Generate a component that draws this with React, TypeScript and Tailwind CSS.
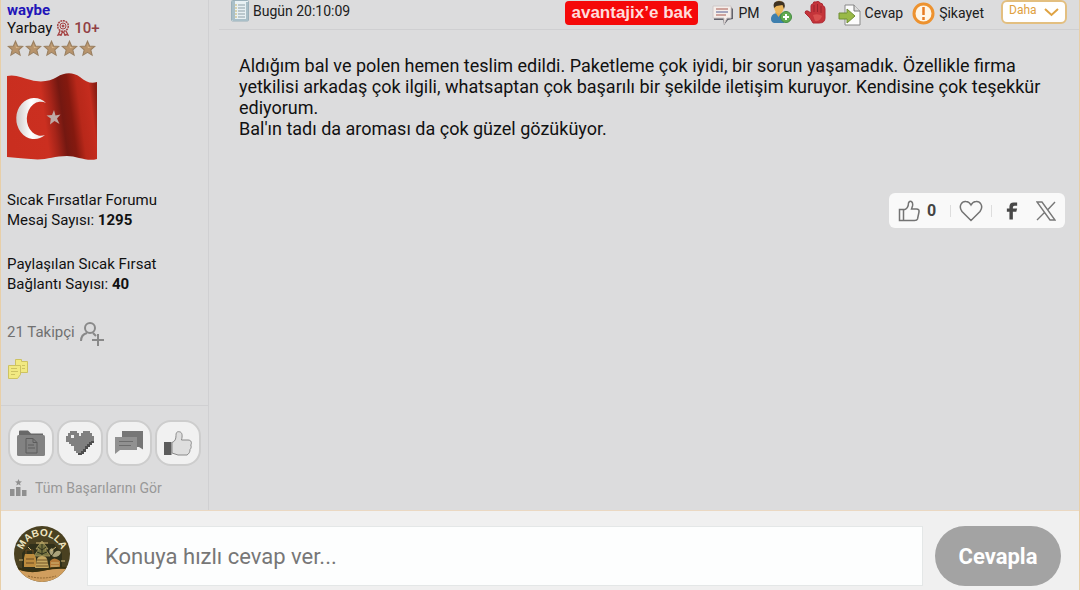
import type { ReactNode } from "react";

function StarRow() {
  return (
    <div className="mt-1 flex gap-px" aria-label="5 yıldız">
      {[1, 2, 3, 4, 5].map((n) => (
        <svg key={n} width="17" height="17" viewBox="0 0 17 17">
          <path
            d="M8.5 1.2l2.1 4.8 5.2.4-4 3.5 1.3 5.2-4.6-2.8-4.6 2.8 1.3-5.2-4-3.5 5.2-.4z"
            fill="#b8946c"
            stroke="#9a8062"
            strokeWidth="1.1"
          />
          <path d="M8.5 3.6l1 3.3 3 .4-3.6 1z" fill="#d9b98f" />
        </svg>
      ))}
    </div>
  );
}

function Flag() {
  return (
    <svg width="90" height="89" viewBox="0 0 90 89" className="block">
      <defs>
        <linearGradient id="cloth" gradientUnits="userSpaceOnUse" x1="0" y1="40" x2="90" y2="28">
          <stop offset="0" stopColor="#c92e1f" />
          <stop offset="0.4" stopColor="#cb2f20" />
          <stop offset="0.5" stopColor="#a52419" />
          <stop offset="0.6" stopColor="#741811" />
          <stop offset="0.7" stopColor="#84190f" />
          <stop offset="0.8" stopColor="#b8281a" />
          <stop offset="0.93" stopColor="#c42c1e" />
          <stop offset="1" stopColor="#8c1e14" />
        </linearGradient>
        <linearGradient id="moon">
          <stop offset="0" stopColor="#cfc9c8" />
          <stop offset="0.5" stopColor="#ffffff" />
          <stop offset="1" stopColor="#e8dedc" />
        </linearGradient>
      </defs>
      <path
        d="M0 4C8 2 16 6 24 8C34 11 44 9 50 5C58 0 66 0 73 5C79 10 84 12 90 10V87C80 90 70 84 60 84C46 84 38 89 24 87C14 86 8 86 0 85Z"
        fill="url(#cloth)"
      />
      <path d="M39 31A18 20.5 0 1 0 38 63A14 17 0 1 1 39 31Z" fill="url(#moon)" />
      <path d="M47 38l1.500 5.500 5-1-3.500 4 2.500 5.500-5-3-4.500 3.500.8-6-4.300-3 5.500-.6z" fill="#bfa9a5" />
    </svg>
  );
}

function Badge({ label, children }: { label: string; children: ReactNode }) {
  return (
    <button
      type="button"
      aria-label={label}
      className="flex size-[46px] items-center justify-center rounded-2xl border-2 border-[#cdcdcd] bg-[#f1f1f1]"
    >
      {children}
    </button>
  );
}

function FolderIcon() {
  return (
    <svg width="28" height="26" viewBox="0 0 28 26">
      <path d="M2 7V1.500Q2 .5 3 .5H11L14 3.500H26V7Z" fill="#686868" />
      <rect y="5" width="28" height="21" rx="1.500" fill="#828282" />
      <path d="M9 8.500h7l4 4V23H9zM16 8.500v4h4M11 15h6M11 18h7" fill="none" stroke="#5c5c5c" />
    </svg>
  );
}

function PixelHeart() {
  return (
    <svg width="28" height="24" viewBox="0 0 28 24">
      <path
        d="M4 0h7v2h2v3h2V2h2V0h7v2h2v3h2v6h-2v2h-2v2h-2v2h-2v3h-2v2h-2v2h-4v-2h-2v-2h-2v-3H8v-2H5v-2H3v-2H0V5h2V2h2z"
        fill="#808080"
      />
      <path
        d="M28 10v2h-2v2h-2v2h-2v2h-2v3h-2v2h-2v1h-4v-2h3v-2h2v-2h2v-3h2v-2h2v-2h2v-1z"
        fill="#4d4d4d"
      />
      <path d="M5 4h3v3H5z" fill="#f1f1f1" />
    </svg>
  );
}

function ChatIcon() {
  return (
    <svg width="28" height="24" viewBox="0 0 28 24">
      <path d="M7 0h21v18.500L24 16H7z" fill="#767676" />
      <path d="M0 6h22v13H5l-5 4z" fill="#919191" />
      <path d="M4 10.500h14M4 14.500h12" stroke="#6c6c6c" strokeWidth="1.200" />
    </svg>
  );
}

function ThumbBadge() {
  return (
    <svg width="28" height="25" viewBox="0 0 28 25">
      <rect y="11" width="7.500" height="13" fill="#5c5c5c" />
      <path
        d="M8 11.500c3-1 4-3.500 4-7C12 .5 14 .5 15.500.8c3 .5 3 4.200 2 8.200h6.500c3.500 0 4 3 2.800 5 .8 2 .2 3.500-.8 4.500 0 2.500-.8 4-3 5.500H14l-6-2z"
        fill="#dedede"
        stroke="#8a8a8a"
      />
    </svg>
  );
}

function Avatar() {
  return (
    <svg width="56" height="56" viewBox="1 1 56 56" role="img" aria-label="Mabolla" className="shrink-0">
      <defs>
        <path id="arc" d="M9 31A20 20 0 0 1 49 31" />
        <clipPath id="round">
          <circle cx="29" cy="29" r="28" />
        </clipPath>
      </defs>
      <circle cx="29" cy="29" r="28" fill="#4a4121" />
      <g clipPath="url(#round)">
        <path d="M9 28l8-9h24l8 9v17H9z" fill="#30301a" />
        <path d="M29 16l-6 8h3l-5 7h16l-5-7h3z" fill="#777441" stroke="#aa9b60" strokeWidth=".8" />
        <path d="M29 19v11M25 22l4 3 4-3M24 27l5 2 5-2" stroke="#2f321d" fill="none" />
        <path d="M12 29h9l2 4v9H11v-9z" fill="#bd8c3e" />
        <path d="M13 29v-4h7v4M13 34h8M13 38h8" stroke="#6b4b20" fill="none" />
        <path d="M24 34c1-4 9-4 10 0l2 9H22z" fill="#c5a760" />
        <path d="M24 35h10M23 38h12M23 41h12" stroke="#735426" />
        <path d="M39 31q5-8 9-4-1 5-7 5M38 30q-4-5 1-7 3 3 0 7" fill="#aaa27a" />
        <path d="M37 36q4-5 10 0v8H37z" fill="#b47a38" />
        <path d="M38 38h8M38 41h8M15 22l3 3M43 22l-5 4M6 35h4M48 36h4M23 18h12" stroke="#d0b777" />
        <path d="M3 43q12 6 25 3t28-3v16H3z" fill="#d09e5e" />
        <path d="M4 43q12 5 25 2t25-2" fill="none" stroke="#38300f" strokeWidth="2" />
        <path d="M15 51q14 4 28 0" fill="none" stroke="#8f6632" strokeDasharray="2 1" />
      </g>
      <text fontFamily="Liberation Sans, sans-serif" fontSize="10" fontWeight="700" fill="#efe5c0">
        <textPath href="#arc" startOffset="50%" textAnchor="middle">
          MABOLLA
        </textPath>
      </text>
    </svg>
  );
}

function Profile() {
  return (
    <aside className="flex w-52 shrink-0 flex-col border-r border-[#d0d0d2]">
      <div className="flex-1 px-1.5 text-[15px] leading-5">
        <a href="#waybe" className="block font-bold text-[#2215b8]">
          waybe
        </a>
        <div className="flex h-4 items-center gap-1">
          <span>Yarbay</span>
          <svg width="14" height="16" viewBox="0 0 14 16" fill="none" stroke="#a54444">
            <circle cx="7" cy="6" r="5.300" strokeWidth="1.500" strokeDasharray="2 .7" />
            <circle cx="7" cy="6" r="3" />
            <circle cx="7" cy="6" r="1" fill="#a54444" />
            <path d="M4 11l-2 4 2-.5 1 1 1.500-4M10 11l2 4-2-.5-1 1-1.500-4" strokeWidth="1.300" />
          </svg>
          <span className="font-medium text-[#914044]">10+</span>
        </div>
        <StarRow />
        <div className="mt-[15px]">
          <Flag />
        </div>
        <div className="mt-[29px] text-[#111]">
          <p>Sıcak Fırsatlar Forumu</p>
          <p>
            Mesaj Sayısı: <b>1295</b>
          </p>
        </div>
        <div className="mt-6 text-[#111]">
          <p>Paylaşılan Sıcak Fırsat</p>
          <p>
            Bağlantı Sayısı: <b>40</b>
          </p>
        </div>
        <div className="mt-6 flex h-7 items-center gap-1 text-[#707070]">
          <span>21 Takipçi</span>
          <button type="button" aria-label="Takip et" className="mt-1">
            <svg width="26" height="26" viewBox="0 0 26 26" fill="none" stroke="#898989" strokeWidth="2">
              <circle cx="11" cy="7" r="5" />
              <path d="M2 20c0-4 2-7 6-8M14 12l3 3M19 13v12M13 19h12" />
            </svg>
          </button>
        </div>
        <button type="button" aria-label="Notlar" className="mt-3 block">
          <svg width="22" height="22" viewBox="0 0 22 22" fill="#f1e982" stroke="#cdc262">
            <path d="M8.500 1.500h6v2h6v11h-12z" />
            <path d="M1.500 7.500h12v9l-3 4h-9z" />
            <path d="M4 10.500h6M4 13.500h7M4 16.500h4M15 7.500h3M15 10.500h3" />
          </svg>
        </button>
      </div>
      <div className="border-t border-[#d0d0d2] px-[7px] pt-[14px] pb-3">
        <div className="flex gap-[3px]">
          <Badge label="Konular">
            <FolderIcon />
          </Badge>
          <Badge label="Beğenilenler">
            <PixelHeart />
          </Badge>
          <Badge label="Mesajlar">
            <ChatIcon />
          </Badge>
          <Badge label="Beğeniler">
            <ThumbBadge />
          </Badge>
        </div>
        <a href="#basarilar" className="mt-3 flex items-center gap-2 pl-0.5 text-sm leading-5 text-[#989898]">
          <svg width="17" height="18" viewBox="0 0 17 18" fill="#909090">
            <path d="M0 10h4.500v7H0zM6 8h4.500v9H6zM12 11h4.500v6H12zM8.500 0l1 2.200 2.500.2-2 1.600.6 2.500-2.100-1.300-2.100 1.300L7 4 5 2.400l2.500-.2z" />
          </svg>
          Tüm Başarılarını Gör
        </a>
      </div>
    </aside>
  );
}

function Toolbar() {
  return (
    <header className="ml-[10px] flex h-[30px] items-start border-b border-[#cfcfd1] text-sm leading-[22px] text-[#202020]">
      <div className="flex items-center gap-1 pl-3">
        <svg width="18" height="22" viewBox="0 0 18 22">
          <rect x=".5" y=".5" width="17" height="20.500" rx="1" fill="#e8f1f4" stroke="#9ab0ba" />
          <path d="M1 1h3v19H1zM15 2h2v19H2v-2h13z" fill="#a9bfc8" />
          <path d="M7 5h7M7 8h7M7 11h7M7 14h7M7 17h7" stroke="#8d9fa7" />
          <path d="M4.500 5h1M4.500 8h1M4.500 11h1M4.500 14h1M4.500 17h1" stroke="#ba9e3c" strokeWidth="1.300" />
        </svg>
        <time>Bugün 20:10:09</time>
      </div>
      <div className="ml-auto flex items-start pr-3">
        <a
          href="#avantajix"
          className="mt-px mr-[14px] h-6 rounded bg-[#f50909] px-1.5 font-['Liberation_Sans',sans-serif] text-[17px] leading-6 font-bold text-[#ffdcdc]"
        >
          avantajix’e bak
        </a>
        <button type="button" className="mr-[10px] flex items-center gap-1">
          <svg width="22" height="22" viewBox="0 0 22 22" className="mt-1">
            <path d="M2 3h17l2 2v10l-5 1-4 5-1-5H2z" fill="#62626b" />
            <path d="M1 2h18v12h-4l-3 6v-6H1z" fill="#f5eeea" stroke="#cfc8c8" />
            <path d="M4 5h12M4 11h10" stroke="#c18b83" strokeWidth="1.500" />
            <path d="M4 8h12" stroke="#888daf" strokeWidth="1.500" />
          </svg>
          PM
        </button>
        <button type="button" aria-label="Arkadaş ekle" className="mr-3">
          <svg width="22" height="24" viewBox="0 0 22 24" className="block">
            <path d="M1 19c0-4 3-6 7-6s6 1 7 5l-1 5H4q-3-1-3-4z" fill="#3e7fae" />
            <path d="M5 12h7l-3.500 5z" fill="#e5ab4c" />
            <ellipse cx="9" cy="7" rx="5" ry="6.500" fill="#ebb65b" />
            <path d="M4 8Q2 1 9 1q8 0 5 8l-1.500-4-6 1z" fill="#3f3222" />
            <circle cx="16" cy="17" r="5.500" fill="#62ab50" stroke="#438b42" />
            <path d="M16 14v6M13 17h6" stroke="#fff" strokeWidth="2" />
          </svg>
        </button>
        <button type="button" aria-label="Engelle" className="mr-3 pt-px">
          <svg width="22" height="23" viewBox="0 0 22 23" className="block">
            <path
              d="M6 17L1 12q0-3 3-2l3 2V5q0-2 2-2 0-3 3-2 3-2 4 1 3 0 3 3 2 0 2 3v9q0 5-6 5H9z"
              fill="#c4343a"
              stroke="#ad2833"
            />
            <path d="M10 4v7M13.500 3v8M17 5v7" stroke="#98232c" />
            <path d="M9 14q5-2 9 1-2 6-7 5z" fill="#d8504f" />
          </svg>
        </button>
        <button type="button" className="mr-[9px] flex items-center gap-1">
          <svg width="23" height="22" viewBox="0 0 23 22" className="mt-1">
            <path d="M7 1h9l6 6v14H7z" fill="#fcfcfc" stroke="#888" />
            <path d="M16 1v6h6" fill="#ddd" stroke="#777" />
            <path d="M1 9h8V5l8 7-8 7v-4H1z" fill="#99b947" stroke="#6f8e35" />
          </svg>
          Cevap
        </button>
        <button type="button" className="mr-[17px] flex items-center gap-1">
          <svg width="23" height="23" viewBox="0 0 23 23" className="mt-0.5">
            <circle cx="11.500" cy="11.500" r="9.500" fill="#fff6e7" stroke="#ed922f" strokeWidth="3" />
            <path d="M11.500 5v8M11.500 15v3" stroke="#e77c23" strokeWidth="2.500" />
          </svg>
          Şikayet
        </button>
        <button
          type="button"
          className="flex h-6 w-[66px] items-start justify-between rounded-md border-2 border-[#e3bf80] bg-white px-1.5 text-xs leading-4 text-[#e0a040]"
        >
          Daha
          <svg width="15" height="9" viewBox="0 0 15 9" className="mt-1.5">
            <path d="M1 1l6.500 6L14 1" fill="none" stroke="#dfa343" strokeWidth="2" />
          </svg>
        </button>
      </div>
    </header>
  );
}

function Reactions() {
  return (
    <div className="flex h-[35px] w-[176px] items-center rounded-md bg-[#f9f9f9] pl-[9px] text-[#555]">
      <button type="button" className="flex items-center gap-[7px] text-base font-bold text-[#444]">
        <svg width="22" height="22" viewBox="0 0 22 22" fill="none" stroke="#737373" strokeWidth="1.500">
          <path d="M1.500 9.500h4v11h-4zM5.500 10c4-1 5-3 5-7 1-3 5-2 4 3l-1 3h5q3 0 2.500 3l-1.500 7q-.5 1.500-3 1.500h-11" />
        </svg>
        0
      </button>
      <span className="mr-2 ml-[14px] h-3 w-px bg-[#ddd]" />
      <button type="button" aria-label="Favori">
        <svg width="24" height="22" viewBox="0 0 24 22" fill="none" stroke="#737373" strokeWidth="1.500">
          <path d="M12 20.500L3 11.500C-1 6 3 1 7 1.500q3 0 5 3.500 2-3.500 5-3.500c4-.5 8 4.500 4 10z" />
        </svg>
      </button>
      <span className="mr-[14px] ml-2 h-3 w-px bg-[#ddd]" />
      <button type="button" aria-label="Facebook">
        <svg width="12" height="20" viewBox="0 0 14 20" fill="#484848">
          <path d="M4 20v-9H1V7h3V5q0-5 5-5h4v4h-3q-2 0-2 2v1h5l-1 4H8v9z" />
        </svg>
      </button>
      <button type="button" aria-label="X" className="ml-[18px]">
        <svg width="20" height="20" viewBox="0 0 20 20" fill="none" stroke="#777" strokeWidth="1.400">
          <path d="M1 1h5l13 18h-5zM19 1l-7.500 8M8.500 11.500L1 19" />
        </svg>
      </button>
    </div>
  );
}

export default function App() {
  return (
    <main className="flex min-h-screen flex-col overflow-x-hidden border-x border-[#e8cfa8] bg-[#dcdcdd] font-[Roboto,sans-serif] text-[#111]">
      <div className="flex flex-1">
        <Profile />
        <article className="min-w-0 flex-1">
          <Toolbar />
          <p className="mt-[25px] mr-7 ml-[30px] text-lg leading-[21px]">
            Aldığım bal ve polen hemen teslim edildi. Paketleme çok iyidi, bir sorun yaşamadık. Özellikle firma
            yetkilisi arkadaş çok ilgili, whatsaptan çok başarılı bir şekilde iletişim kuruyor. Kendisine çok teşekkür
            ediyorum.
            <br />
            Bal'ın tadı da aroması da çok güzel gözüküyor.
          </p>
          <div className="mt-[54px] mr-[14px] flex justify-end">
            <Reactions />
          </div>
        </article>
      </div>
      <form
        onSubmit={(e) => e.preventDefault()}
        className="flex items-start gap-3 border-t border-[#ead8c2] bg-[#f0f0f0] pt-[15px] pr-[18px] pb-1 pl-[13px]"
      >
        <Avatar />
        <input
          aria-label="Hızlı cevap"
          placeholder="Konuya hızlı cevap ver..."
          className="ml-[5px] h-[60px] min-w-0 flex-1 border border-[#e4e7e7] bg-[#fdfefe] px-[17px] text-[22px] placeholder:text-[#777]"
        />
        <button type="submit" className="h-[60px] w-[126px] rounded-full bg-[#a3a3a3] text-[22px] font-bold text-white">
          Cevapla
        </button>
      </form>
    </main>
  );
}
